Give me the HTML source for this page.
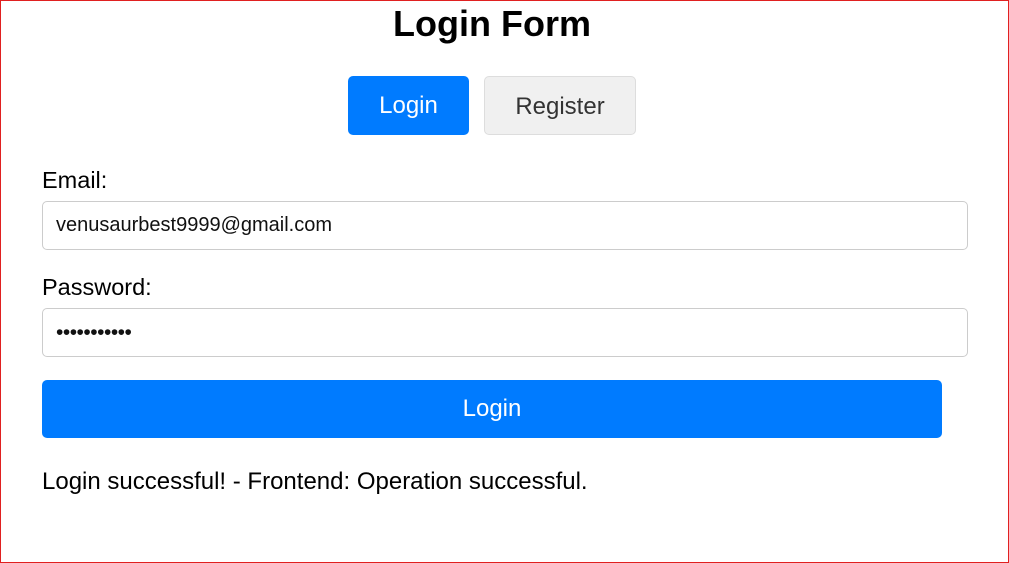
<!DOCTYPE html>
<html><head><style>
html,body{margin:0;padding:0;}
body{width:1009px;height:563px;position:relative;overflow:hidden;font-family:"Liberation Sans",Arial,sans-serif;background:#fff;box-sizing:border-box;}
.frame{position:absolute;left:0;top:0;width:1007px;height:561px;border:1px solid #e02020;}
.a{position:absolute;}
h1{position:absolute;left:0;width:984px;text-align:center;top:4px;margin:0;font-size:36px;font-weight:bold;line-height:40px;color:#000;}
.tab{position:absolute;top:76px;height:59px;border-radius:5px;box-sizing:border-box;font-size:24px;line-height:59px;text-align:center;}
.lbl{position:absolute;left:42px;font-size:23.5px;color:#000;line-height:26px;}
.inp{position:absolute;left:42px;width:926px;height:49px;box-sizing:border-box;border:1px solid #ccc;border-radius:5px;font-size:20px;line-height:47px;padding-left:13px;color:#111;}
</style></head><body>
<div class="frame"></div>
<h1>Login Form</h1>
<div class="tab" style="left:348px;width:121px;background:#007bff;color:#fff;">Login</div>
<div class="tab" style="left:484px;width:152px;background:#f0f0f0;border:1px solid #ddd;color:#333;">Register</div>
<div class="lbl" style="top:167px;">Email:</div>
<div class="inp" style="top:201px;">venusaurbest9999@gmail.com</div>
<div class="lbl" style="top:274px;">Password:</div>
<div class="inp" style="top:308px;font-size:21px;letter-spacing:-0.5px;">•••••••••••</div>
<div class="a" style="left:42px;top:380px;width:900px;height:58px;background:#007bff;border-radius:5px;color:#fff;font-size:24px;line-height:58px;text-align:center;">Login</div>
<div class="lbl" style="top:469px;font-size:24px;">Login successful! - Frontend: Operation successful.</div>
</body></html>
